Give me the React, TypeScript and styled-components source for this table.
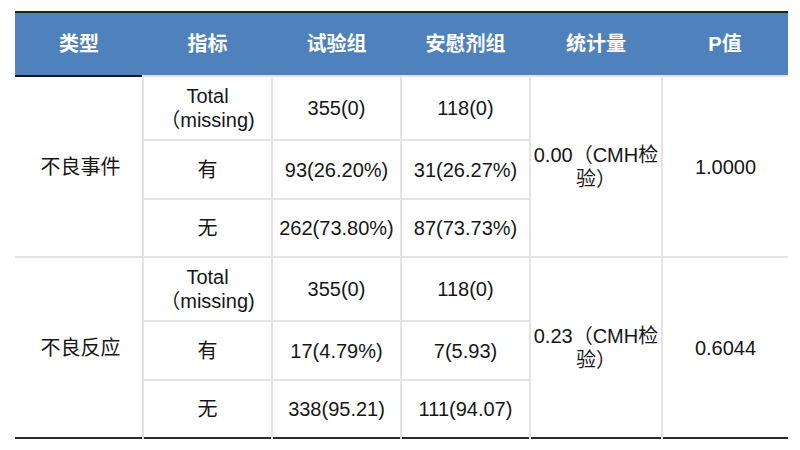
import React from 'react';
import styled, { createGlobalStyle } from 'styled-components';

const GlobalStyle = createGlobalStyle`
    html, body {
        margin: 0;
        padding: 0;
        background: #fff;
    }
`;

const Page = styled.div`
    width: 800px;
    height: 450px;
    padding: 11px 0 0 15px;
    box-sizing: border-box;
`;

const Table = styled.table`
    width: 773px;
    table-layout: fixed;
    border-collapse: collapse;

    font-family: 'Liberation Sans', 'Noto Sans CJK SC', sans-serif;
    font-size: 20px;
    line-height: 24px;
    color: #161616;

    border-top: 2px solid #1f1f1f;
    border-bottom: 2px solid #2a2a2a;
`;

const HeadRow = styled.tr`
    height: 64px;
    background-color: #4f81bd;
    border-bottom: 2px solid #1a1a1a;
`;

const Th = styled.th`
    padding: 0;
    color: #fff;
    font-weight: bold;
    text-align: center;
    vertical-align: middle;
`;

const Row = styled.tr<{ tall?: boolean; last?: boolean; groupEnd?: boolean }>`
    height: ${({ tall, last }) => (tall ? '64px' : last ? '58px' : '59px')};
    border-bottom: ${({ groupEnd }) => (groupEnd ? '2px solid #e2e2e2' : 'none')};
`;

const Td = styled.td`
    padding: 0 2px;
    text-align: center;
    vertical-align: middle;
    border-left: 2px solid #e4e4e4;
    border-top: 2px solid #e4e4e4;
`;

const GroupCell = styled.td`
    padding: 0 0 0 4px;
    text-align: center;
    vertical-align: middle;
`;

type TGroup = {
    name: string;
    total: [string, string];
    yes: [string, string];
    no: [string, string];
    stat: string;
    p: string;
};

const groups: TGroup[] = [
    {
        name: '不良事件',
        total: ['355(0)', '118(0)'],
        yes: ['93(26.20%)', '31(26.27%)'],
        no: ['262(73.80%)', '87(73.73%)'],
        stat: '0.00（CMH检验）',
        p: '1.0000',
    },
    {
        name: '不良反应',
        total: ['355(0)', '118(0)'],
        yes: ['17(4.79%)', '7(5.93)'],
        no: ['338(95.21)', '111(94.07)'],
        stat: '0.23（CMH检验）',
        p: '0.6044',
    },
];

export default function App() {
    return (
        <>
            <GlobalStyle />
            <Page>
                <Table>
                    <colgroup>
                        <col style={{ width: 128 }} />
                        <col style={{ width: 129 }} />
                        <col style={{ width: 129 }} />
                        <col style={{ width: 129 }} />
                        <col style={{ width: 132 }} />
                        <col style={{ width: 126 }} />
                    </colgroup>
                    <thead>
                        <HeadRow>
                            <Th>类型</Th>
                            <Th>指标</Th>
                            <Th>试验组</Th>
                            <Th>安慰剂组</Th>
                            <Th>统计量</Th>
                            <Th>P值</Th>
                        </HeadRow>
                    </thead>
                    <tbody>
                        {groups.map((g, i) => (
                            <React.Fragment key={g.name}>
                                <Row tall>
                                    <GroupCell rowSpan={3}>{g.name}</GroupCell>
                                    <Td>
                                        Total
                                        <br />
                                        （missing)
                                    </Td>
                                    <Td>{g.total[0]}</Td>
                                    <Td>{g.total[1]}</Td>
                                    <Td rowSpan={3}>{g.stat}</Td>
                                    <Td rowSpan={3}>{g.p}</Td>
                                </Row>
                                <Row>
                                    <Td>有</Td>
                                    <Td>{g.yes[0]}</Td>
                                    <Td>{g.yes[1]}</Td>
                                </Row>
                                <Row last groupEnd={i === 0}>
                                    <Td>无</Td>
                                    <Td>{g.no[0]}</Td>
                                    <Td>{g.no[1]}</Td>
                                </Row>
                            </React.Fragment>
                        ))}
                    </tbody>
                </Table>
            </Page>
        </>
    );
}
